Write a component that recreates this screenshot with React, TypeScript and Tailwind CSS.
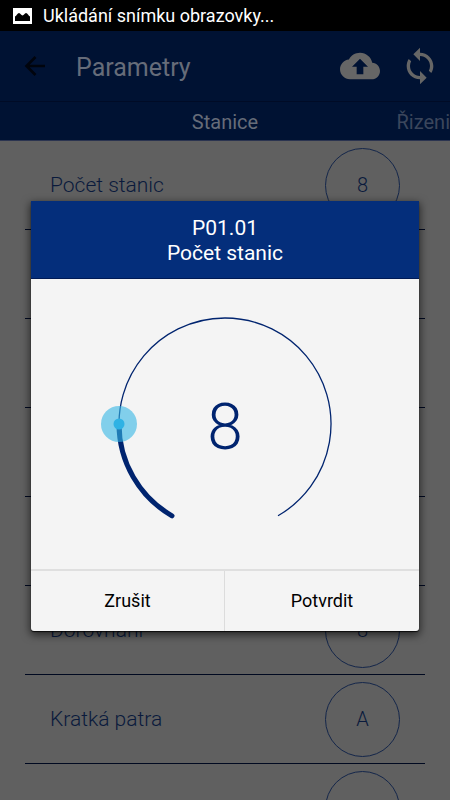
import { useState } from "react";

interface Parameter {
  id: string;
  label?: string;
  value?: string;
}

const PARAMETERS: Parameter[] = [
  { id: "P01.01", label: "Počet stanic", value: "8" },
  { id: "P01.02" },
  { id: "P01.03" },
  { id: "P01.04" },
  { id: "P01.05" },
  { id: "P01.06", label: "Dorovnání", value: "8" },
  { id: "P01.07", label: "Kratká patra", value: "A" },
  { id: "P01.08", label: "Zkracování patra", value: "A" },
];

const MIN = 0;
const MAX = 40;

// The dial starts at the lower left and sweeps 300 degrees clockwise
const CENTER = 125;
const RADIUS = 106;
const START_ANGLE = 120;
const SWEEP = 300;

function pointAt(angle: number) {
  const rad = (angle * Math.PI) / 180;
  return {
    x: CENTER + RADIUS * Math.cos(rad),
    y: CENTER + RADIUS * Math.sin(rad),
  };
}

function arcPath(from: number, to: number) {
  const a = pointAt(from);
  const b = pointAt(to);
  const large = to - from > 180 ? 1 : 0;
  return `M${a.x} ${a.y}A${RADIUS} ${RADIUS} 0 ${large} 1 ${b.x} ${b.y}`;
}

function StatusBar() {
  return (
    <div className="flex h-[31px] shrink-0 items-center gap-[11px] bg-black px-[13px]">
      <svg width="19" height="16" viewBox="0 0 19 16" aria-hidden="true">
        <rect width="19" height="16" fill="#fff" />
        <path
          d="M2 13V8.5C3.5 8 4.5 5 6 5s2 2.5 3.5 2.5S11.5 5 13 5s2.5 3 4 3.500V13z"
          fill="#000"
        />
      </svg>
      <p className="text-lg leading-6 text-white">
        Ukládání snímku obrazovky...
      </p>
    </div>
  );
}

function AppBar() {
  return (
    <header className="flex h-[71px] shrink-0 items-center border-b border-[#000b26] bg-[#001233] pr-2.5 pl-6">
      <button type="button" aria-label="Zpět">
        <svg width="24" height="24" viewBox="0 0 24 24" aria-hidden="true">
          <path
            d="M21 12H3M11.5 3L2.5 12l9 9"
            fill="none"
            stroke="#00040d"
            strokeWidth="2.6"
          />
        </svg>
      </button>
      <h1 className="ml-7 flex-1 pt-1 text-[25px] leading-8 text-[#666c79]">
        Parametry
      </h1>
      <button type="button" aria-label="Nahrát">
        <svg width="40" height="40" viewBox="0 0 24 24" aria-hidden="true">
          <path
            d="M19.35 10.04C18.67 6.59 15.64 4 12 4 9.11 4 6.6 5.64 5.35 8.04 2.34 8.36 0 10.91 0 14c0 3.31 2.69 6 6 6h13c2.76 0 5-2.24 5-5 0-2.64-2.05-4.78-4.65-4.96zM14 12.5V17h-4v-4.5H7.2L12 7.7l4.8 4.8z"
            fill="#666"
          />
        </svg>
      </button>
      <button type="button" aria-label="Obnovit" className="ml-5">
        <svg width="40" height="40" viewBox="0 0 24 24" aria-hidden="true">
          <path
            d="M12 4V1L8 5l4 4V6c3.31 0 6 2.69 6 6 0 1.01-.25 1.97-.7 2.8l1.46 1.46C19.54 15.03 20 13.57 20 12c0-4.42-3.58-8-8-8zm0 14c-3.31 0-6-2.69-6-6 0-1.01.25-1.97.7-2.8L5.24 7.74C4.46 8.97 4 10.43 4 12c0 4.42 3.58 8 8 8v3l4-4-4-4v3z"
            fill="#666"
          />
        </svg>
      </button>
    </header>
  );
}

function Tabs() {
  return (
    <nav className="grid h-[39px] shrink-0 grid-cols-[1fr_auto_1fr] items-center border-b border-[#2b3450] bg-[#001233] pt-0.5 text-xl leading-6">
      <span />
      <button type="button" className="text-[#666c79]">
        Stanice
      </button>
      <button
        type="button"
        className="justify-self-end whitespace-nowrap text-[#3b465c]"
      >
        Řizeni
      </button>
    </nav>
  );
}

function ParameterRow({ label, value }: Parameter) {
  return (
    <li className="flex h-[89px] shrink-0 items-center justify-between border-b border-[#000920] px-[25px] font-light text-[#0a1a3c]">
      <span className="text-[21px] leading-7">{label}</span>
      {value && (
        <button
          type="button"
          aria-label={label}
          className="size-[75px] rounded-full border border-[#14264a] text-xl"
        >
          {value}
        </button>
      )}
    </li>
  );
}

interface DialProps {
  value: number;
  onChange: (value: number) => void;
}

function Dial({ value, onChange }: DialProps) {
  const angle = START_ANGLE + ((value - MIN) / (MAX - MIN)) * SWEEP;
  const thumb = pointAt(angle);

  return (
    <div className="relative grid size-[250px] place-items-center">
      <svg
        className="col-start-1 row-start-1"
        width="250"
        height="250"
        viewBox="0 0 250 250"
        fill="none"
        aria-hidden="true"
      >
        <path
          d={arcPath(START_ANGLE, START_ANGLE + SWEEP)}
          stroke="#00246f"
          strokeWidth="1.3"
        />
        <path
          d={arcPath(START_ANGLE, angle)}
          stroke="#00246f"
          strokeWidth="5"
          strokeLinecap="round"
        />
        <circle cx={thumb.x} cy={thumb.y} r="18" fill="#33b5e5" opacity="0.6" />
        <circle cx={thumb.x} cy={thumb.y} r="5.5" fill="#2fb2e4" />
      </svg>
      <output
        htmlFor="dial"
        className="col-start-1 row-start-1 pt-2 text-[64px] leading-none font-light text-[#00246f]"
      >
        {value}
      </output>
      <label htmlFor="dial" className="absolute inset-0">
        <input
          id="dial"
          type="range"
          aria-label="Počet stanic"
          min={MIN}
          max={MAX}
          value={value}
          onChange={(e) => onChange(Number(e.target.value))}
          className="size-full cursor-pointer opacity-0"
        />
      </label>
    </div>
  );
}

function ParameterDialog() {
  const [value, setValue] = useState(8);

  return (
    <div
      role="dialog"
      aria-labelledby="dialog-title"
      className="w-full overflow-hidden rounded-b-[3px] bg-[#f4f4f4] shadow-[0_1px_1px_0_rgba(0,0,0,0.8),0_3px_8px_1px_rgba(0,0,0,0.6)]"
    >
      <h2
        id="dialog-title"
        className="border-b border-[#001a55] bg-[#042e7b] pt-[15px] pb-3 text-center text-[21px] leading-[25px] text-white"
      >
        P01.01
        <br />
        Počet stanic
      </h2>
      <div className="flex justify-center py-5">
        <Dial value={value} onChange={setValue} />
      </div>
      <div className="grid grid-cols-2 divide-x divide-[#dcdcdc] border-t-2 border-[#dfdfdf] text-lg text-black">
        <button type="button" className="h-[60px]">
          Zrušit
        </button>
        <button type="button" className="h-[60px]">
          Potvrdit
        </button>
      </div>
    </div>
  );
}

export default function App() {
  return (
    <div className="relative flex h-screen flex-col overflow-hidden bg-[#606060] font-[Roboto,sans-serif]">
      <StatusBar />
      <AppBar />
      <Tabs />
      <ul className="flex min-h-0 flex-1 flex-col overflow-hidden px-[25px]">
        {PARAMETERS.map((parameter) => (
          <ParameterRow key={parameter.id} {...parameter} />
        ))}
      </ul>
      <div className="absolute inset-x-0 top-[31px] bottom-0 flex items-center justify-center px-[31px]">
        <ParameterDialog />
      </div>
    </div>
  );
}
